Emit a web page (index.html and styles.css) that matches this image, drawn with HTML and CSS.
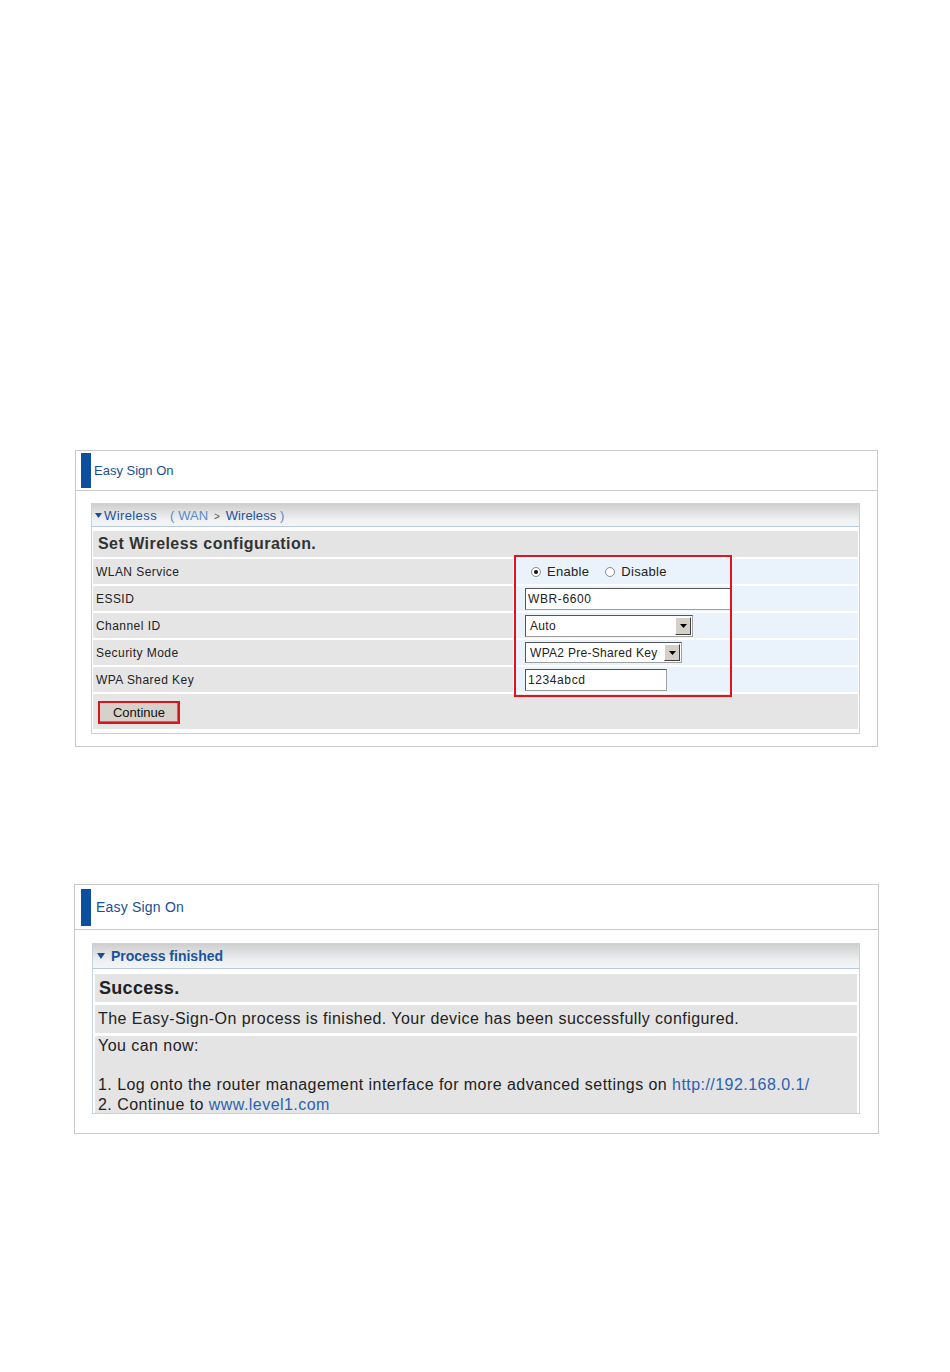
FILE: index.html
```html
<!DOCTYPE html>
<html lang="en">
<head>
    <meta charset="UTF-8">
    <meta name="viewport" content="width=device-width, initial-scale=1.0">
    <title>Easy Sign On</title>
    <link rel="stylesheet" href="styles.css">
</head>
<body>
    <div class="panel panel-wireless">
        <div class="panel-head">
            <span class="bar"></span>
            <span class="panel-title">Easy Sign On</span>
        </div>
        <div class="panel-body">
            <div class="box">
                <div class="box-head">
                    <svg class="tri" width="7" height="5" viewBox="0 0 7 5"><path d="M0 0h7L3.5 5z" fill="#1a4f96"/></svg>
                    <span class="head-main">Wireless</span>
                    <span class="crumb">( WAN <span class="sep">&gt;</span> <span class="crumb-cur">Wireless</span> )</span>
                </div>
                <div class="rows">
                    <div class="row-title">Set Wireless configuration.</div>
                    <div class="row">
                        <div class="label">WLAN Service</div>
                        <div class="value">
                            <span class="radio checked"></span><span class="radio-text">Enable</span>
                            <span class="radio"></span><span class="radio-text">Disable</span>
                        </div>
                    </div>
                    <div class="row">
                        <div class="label">ESSID</div>
                        <div class="value"><div class="field field-essid">WBR-6600</div></div>
                    </div>
                    <div class="row">
                        <div class="label">Channel ID</div>
                        <div class="value">
                            <div class="select select-channel">
                                <span class="select-text">Auto</span>
                                <span class="select-btn"><svg width="7" height="4" viewBox="0 0 7 4"><path d="M0 0h7L3.5 4z" fill="#000"/></svg></span>
                            </div>
                        </div>
                    </div>
                    <div class="row">
                        <div class="label">Security Mode</div>
                        <div class="value">
                            <div class="select select-security">
                                <span class="select-text">WPA2 Pre-Shared Key</span>
                                <span class="select-btn"><svg width="7" height="4" viewBox="0 0 7 4"><path d="M0 0h7L3.5 4z" fill="#000"/></svg></span>
                            </div>
                        </div>
                    </div>
                    <div class="row">
                        <div class="label">WPA Shared Key</div>
                        <div class="value"><div class="field field-key">1234abcd</div></div>
                    </div>
                    <div class="row-btn">
                        <button type="button" class="btn-continue">Continue</button>
                    </div>
                    <div class="highlight"></div>
                </div>
            </div>
        </div>
    </div>

    <div class="panel panel-done">
        <div class="panel-head">
            <span class="bar"></span>
            <span class="panel-title">Easy Sign On</span>
        </div>
        <div class="panel-body">
            <div class="box">
                <div class="box-head">
                    <svg class="tri" width="8" height="6" viewBox="0 0 8 6"><path d="M0 0h8L4 6z" fill="#1a4f96"/></svg>
                    <span class="head-main">Process finished</span>
                </div>
                <div class="rows">
                    <div class="done-title">Success.</div>
                    <div class="done-row">The Easy-Sign-On process is finished. Your device has been successfully configured.</div>
                    <div class="done-row done-list">
                        You can now:<br>
                        <br>
                        1. Log onto the router management interface for more advanced settings on <a href="#">http://192.168.0.1/</a><br>
                        2. Continue to <a href="#">www.level1.com</a>
                    </div>
                </div>
            </div>
        </div>
    </div>
</body>
</html>
```

FILE: styles.css
```css
*{
    margin: 0;
    padding: 0;
    box-sizing: border-box;
}

body{
    background-color: #fff;
    font-family: "Liberation Sans", Arial, sans-serif;
    color: #222;
}

.panel{
    border: 1px solid #c9c9c9;
    background-color: #fff;
}

.panel-wireless{
    width: 803px;
    margin: 450px 0 0 75px;
}

.panel-done{
    width: 805px;
    margin: 137px 0 0 74px;
}

.panel-head{
    display: flex;
    align-items: center;
    border-bottom: 1px solid #c9c9c9;
}

.panel-wireless .panel-head{
    height: 40px;
}

.panel-done .panel-head{
    height: 45px;
}

.bar{
    display: block;
    width: 10px;
    background-color: #0b4f9e;
}

.panel-wireless .bar{
    height: 35px;
    margin: 0 3px 0 5px;
}

.panel-done .bar{
    height: 37px;
    margin: 0 5px 0 6px;
}

.panel-title{
    color: #1b4f93;
    font-size: 13px;
}

.panel-done .panel-title{
    font-size: 14px;
    letter-spacing: 0.2px;
}

.panel-wireless .panel-body{
    padding: 12px 17px 12px 15px;
}

.panel-done .panel-body{
    padding: 13px 18px 19px 17px;
}

.box{
    border: 1px solid #c5d2e0;
}

.box-head{
    display: flex;
    align-items: center;
    background: linear-gradient(#cfcfcf, #eef0f2 70%, #f3f5f8);
    border-bottom: 1px solid #b9c9dc;
    color: #1b52a0;
}

.panel-wireless .box-head{
    height: 23px;
    padding-left: 3px;
    font-size: 13px;
    letter-spacing: 0.4px;
}

.panel-done .box-head{
    height: 25px;
    padding-left: 4px;
    font-size: 14px;
    font-weight: bold;
}

.tri{
    margin-right: 2px;
}

.panel-done .tri{
    margin-right: 6px;
}

.crumb{
    margin-left: 13px;
    color: #5a8acb;
    letter-spacing: 0.1px;
}

.crumb .sep{
    font-size: 10px;
    color: #555;
    margin: 0 2px;
}

.crumb-cur{
    color: #1b52a0;
}

.rows{
    position: relative;
    display: flex;
    flex-direction: column;
    gap: 2px;
    padding: 4px 1px 4px;
}

.row-title{
    height: 26px;
    line-height: 26px;
    padding-left: 5px;
    background-color: #e4e4e4;
    font-size: 16px;
    font-weight: bold;
    letter-spacing: 0.45px;
    color: #333;
}

.row{
    display: grid;
    grid-template-columns: 420px 1fr;
    gap: 2px;
    height: 25px;
}

.label{
    display: flex;
    align-items: center;
    padding-left: 3px;
    background-color: #e5e5e5;
    font-size: 12px;
    letter-spacing: 0.45px;
}

.value{
    display: flex;
    align-items: center;
    padding-left: 10px;
    background-color: #eaf2fb;
    font-size: 12px;
}

.radio{
    width: 10px;
    height: 10px;
    border-radius: 50%;
    border: 1px solid #8a8a8a;
    background-color: #fff;
    margin-left: 6px;
    position: relative;
}

.radio.checked::after{
    content: "";
    position: absolute;
    left: 2px;
    top: 2px;
    width: 4px;
    height: 4px;
    border-radius: 50%;
    background-color: #111;
}

.radio-text{
    margin-left: 6px;
    margin-right: 10px;
    font-size: 13px;
    letter-spacing: 0.3px;
}

.field{
    height: 22px;
    line-height: 20px;
    padding-left: 2px;
    background-color: #fff;
    border: 1px solid #a0a0a0;
    border-top-color: #555;
    border-left-color: #555;
    font-size: 12px;
    letter-spacing: 0.6px;
}

.field-essid{
    width: 206px;
}

.field-key{
    width: 142px;
}

.select{
    display: flex;
    align-items: center;
    justify-content: space-between;
    height: 22px;
    padding: 1px;
    background-color: #fff;
    border: 1px solid #a0a0a0;
    border-top-color: #555;
    border-left-color: #555;
    font-size: 12px;
    letter-spacing: 0.3px;
}

.select-channel{
    width: 168px;
}

.select-security{
    width: 157px;
    height: 21px;
}

.select-text{
    padding-left: 3px;
}

.select-btn{
    display: flex;
    align-items: center;
    justify-content: center;
    width: 16px;
    height: 100%;
    background-color: #d4d0c8;
    border: 1px solid #fff;
    border-right-color: #404040;
    border-bottom-color: #404040;
}

.row-btn{
    height: 35px;
    padding: 7px 0 0 5px;
    background-color: #e5e5e5;
}

.btn-continue{
    width: 82px;
    height: 23px;
    background-color: #d6d2ca;
    border: 2px solid #d8141c;
    box-shadow: inset -1px -1px 0 #808080;
    font-family: "Liberation Sans", Arial, sans-serif;
    font-size: 13px;
    color: #111;
    cursor: pointer;
}

.highlight{
    position: absolute;
    left: 422px;
    top: 28px;
    width: 218px;
    height: 142px;
    border: 2px solid #e3121c;
    pointer-events: none;
}

.panel-done .rows{
    gap: 3px;
    padding: 5px 2px 0 2px;
}

.done-title{
    height: 28px;
    line-height: 28px;
    padding-left: 4px;
    background-color: #e4e4e4;
    font-size: 18px;
    font-weight: bold;
    letter-spacing: 0.3px;
    color: #222;
}

.done-row{
    padding-left: 3px;
    background-color: #e4e4e4;
    font-size: 16px;
    letter-spacing: 0.45px;
    height: 28px;
    line-height: 28px;
}

.done-list{
    height: 77px;
    line-height: 19.5px;
}

.done-row a{
    color: #2a62b2;
    text-decoration: none;
}
```
